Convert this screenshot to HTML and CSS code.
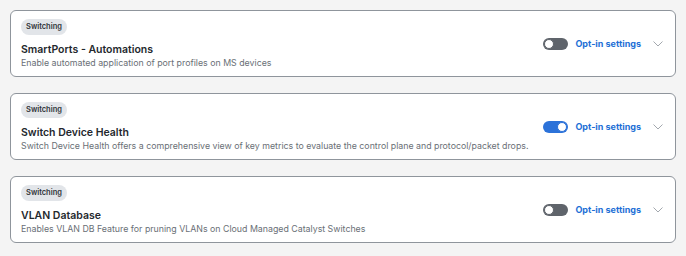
FILE: index.html
```html
<!DOCTYPE html>
<html lang="en">
<head>
  <meta charset="UTF-8">
  <meta name="viewport" content="width=device-width, initial-scale=1.0">
  <title>Early Access</title>
  <link rel="stylesheet" href="styles.css">
</head>
<body>

<div class="feature-list">
  <div class="feature-card">
    <div class="feature-info">
      <span class="tag">Switching</span>
      <h3 class="feature-title">SmartPorts - Automations</h3>
      <p class="feature-desc">Enable automated application of port profiles on MS devices</p>
    </div>
    <div class="feature-actions">
      <span class="toggle"><span class="knob"></span></span>
      <a class="opt-link" href="#">Opt-in settings</a>
      <svg class="chevron" width="10" height="6" viewBox="0 0 10 6"><path d="M0.5 0.5 L5 5 L9.5 0.5" fill="none" stroke="#a3a8ae" stroke-width="1"/></svg>
    </div>
  </div>

  <div class="feature-card">
    <div class="feature-info">
      <span class="tag">Switching</span>
      <h3 class="feature-title">Switch Device Health</h3>
      <p class="feature-desc">Switch Device Health offers a comprehensive view of key metrics to evaluate the control plane and protocol/packet drops.</p>
    </div>
    <div class="feature-actions">
      <span class="toggle on"><span class="knob"></span></span>
      <a class="opt-link" href="#">Opt-in settings</a>
      <svg class="chevron" width="10" height="6" viewBox="0 0 10 6"><path d="M0.5 0.5 L5 5 L9.5 0.5" fill="none" stroke="#a3a8ae" stroke-width="1"/></svg>
    </div>
  </div>

  <div class="feature-card">
    <div class="feature-info">
      <span class="tag">Switching</span>
      <h3 class="feature-title">VLAN Database</h3>
      <p class="feature-desc">Enables VLAN DB Feature for pruning VLANs on Cloud Managed Catalyst Switches</p>
    </div>
    <div class="feature-actions">
      <span class="toggle"><span class="knob"></span></span>
      <a class="opt-link" href="#">Opt-in settings</a>
      <svg class="chevron" width="10" height="6" viewBox="0 0 10 6"><path d="M0.5 0.5 L5 5 L9.5 0.5" fill="none" stroke="#a3a8ae" stroke-width="1"/></svg>
    </div>
  </div>
</div>

</body>
</html>
```
FILE: styles.css
```css
body {
  font-family: Inter, "Noto Sans", sans-serif;
  margin: 0;
  padding: 10px;
  background-color: #f4f4f4;
  color: #2b2f33;
}
.feature-list {
  display: flex;
  flex-direction: column;
  gap: 16px;
}
.feature-card {
  display: flex;
  align-items: center;
  justify-content: space-between;
  height: 67px;
  box-sizing: border-box;
  padding: 0 10px;
  background-color: #fff;
  border: 1px solid #8f959c;
  border-radius: 6px;
}
.feature-info {
  display: flex;
  flex-direction: column;
  align-items: flex-start;
}
.tag {
  display: inline-block;
  height: 16px;
  line-height: 16px;
  padding: 0 5px;
  font-size: 7.5px;
  font-weight: 600;
  color: #2f3338;
  background-color: #e2e5e9;
  border-radius: 8px;
}
.feature-title {
  margin: 8px 0 0;
  font-size: 10.5px;
  line-height: 13px;
  font-weight: 600;
  color: #24282d;
}
.feature-desc {
  margin: 1px 0 0;
  font-size: 8.8px;
  line-height: 12px;
  color: #6a6f76;
}
.feature-actions {
  display: flex;
  align-items: center;
  margin-right: 2px;
}
.toggle {
  position: relative;
  width: 25px;
  height: 12px;
  border-radius: 6px;
  background-color: #5f646b;
  margin-left: 2px;
}
.toggle .knob {
  position: absolute;
  top: 1px;
  left: 1px;
  width: 8px;
  height: 8px;
  border: 1px solid #5f646b;
  border-radius: 50%;
  background-color: #fff;
}
.toggle.on {
  background-color: #2c72d9;
}
.toggle.on .knob {
  left: 14px;
  border-color: #2c72d9;
}
.opt-link {
  margin-left: 7px;
  font-size: 9px;
  font-weight: 700;
  color: #1d6fd6;
  text-decoration: none;
}
.chevron {
  margin-left: 12px;
}
```
